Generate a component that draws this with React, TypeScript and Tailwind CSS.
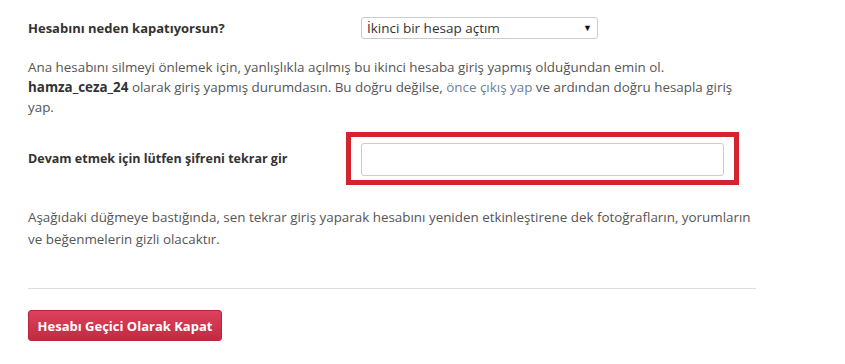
import React from 'react';

const App: React.FC = () => {
  return (
    <div className="w-[845px] h-[364px] bg-white text-[#555] text-[13.4px] leading-[20px]" style={{ fontFamily: '"Open Sans", Lato, sans-serif' }}>
      <div className="pl-[28px] pr-[89px] pt-[17px]">
        <div className="flex items-center h-[22px]">
          <div className="w-[333px] font-bold text-[#333] text-[13px]">Hesabını neden kapatıyorsun?</div>
          <div className="w-[237px] h-[22px] border border-[#ccc] rounded-[3px] flex items-center justify-between pl-[5px] pr-[5px] text-[#333] text-[13.5px]">
            <span>İkinci bir hesap açtım</span>
            <span className="text-[9px] text-[#111]">▼</span>
          </div>
        </div>

        <p className="mt-[18px]">
          <span>Ana hesabını silmeyi önlemek için, yanlışlıkla açılmış bu ikinci hesaba giriş yapmış olduğundan emin ol.</span>{' '}
          <b className="text-[#333]">hamza_ceza_24</b> <span>olarak giriş yapmış durumdasın. Bu doğru değilse,</span>{' '}
          <a className="text-[#6a7f98]">önce çıkış yap</a> <span>ve ardından doğru hesapla giriş</span> <span>yap.</span>
        </p>

        <div className="flex items-center mt-[15px]">
          <div className="w-[318px] font-bold text-[#333] text-[12.5px]">Devam etmek için lütfen şifreni tekrar gir</div>
          <div className="border-[5px] border-[#d3232f] px-[10px] pt-[6px] pb-[4px]">
            <div className="w-[363px] h-[33px] border border-[#ccc] rounded-[3px] bg-white" />
          </div>
        </div>

        <p className="mt-[21px] leading-[22px]">
          Aşağıdaki düğmeye bastığında, sen tekrar giriş yaparak hesabını yeniden etkinleştirene dek fotoğrafların, yorumların ve beğenmelerin gizli olacaktır.
        </p>

        <div className="mt-[38px] border-t border-[#ddd]" />

        <button className="mt-[21px] w-[194px] h-[31px] rounded-[3px] bg-gradient-to-b from-[#dc425b] to-[#c22a42] text-white font-bold text-[13px] border border-[#b8253c]">
          Hesabı Geçici Olarak Kapat
        </button>
      </div>
    </div>
  );
};

export default App;
